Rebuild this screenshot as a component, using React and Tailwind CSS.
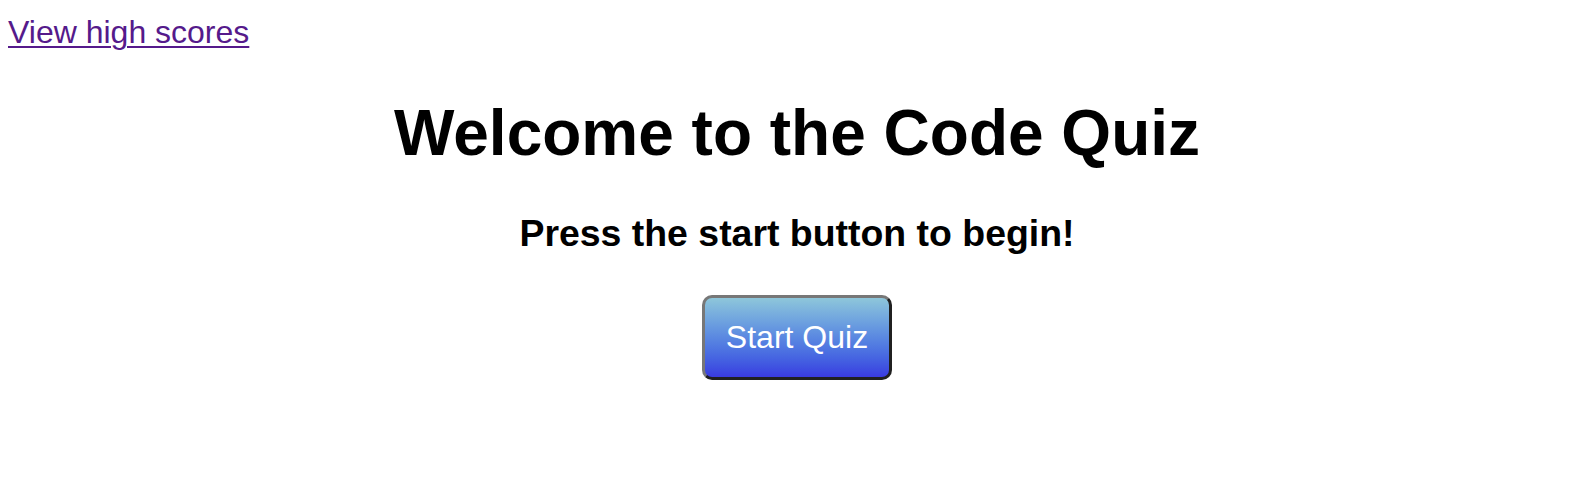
export default function App() {
  return (
    <div className="min-h-[490px] bg-white font-['Liberation_Sans',Arial,sans-serif] text-[32px] leading-[normal] text-black">
      <div className="pl-2 pt-[14px]">
        <a href="#" className="text-[#551a8b] underline decoration-[2px] underline-offset-[3px]">
          View high scores
        </a>
      </div>
      <h1 className="mt-[45px] text-center text-[64px] font-bold leading-[normal]">
        Welcome to the Code Quiz
      </h1>
      <h3 className="mt-[42px] text-center text-[37.44px] font-bold leading-[normal]">
        Press the start button to begin!
      </h3>
      <div className="mt-[40px] flex justify-center">
        <button className="rounded-[10px] border-[3px] border-solid border-t-[#777777] border-l-[#777777] border-r-[#202020] border-b-[#202020] bg-gradient-to-b from-[#8ec6da] to-[#3a3ae0] px-[21px] py-[21px] text-[32px] leading-[normal] text-white">
          Start Quiz
        </button>
      </div>
    </div>
  );
}
